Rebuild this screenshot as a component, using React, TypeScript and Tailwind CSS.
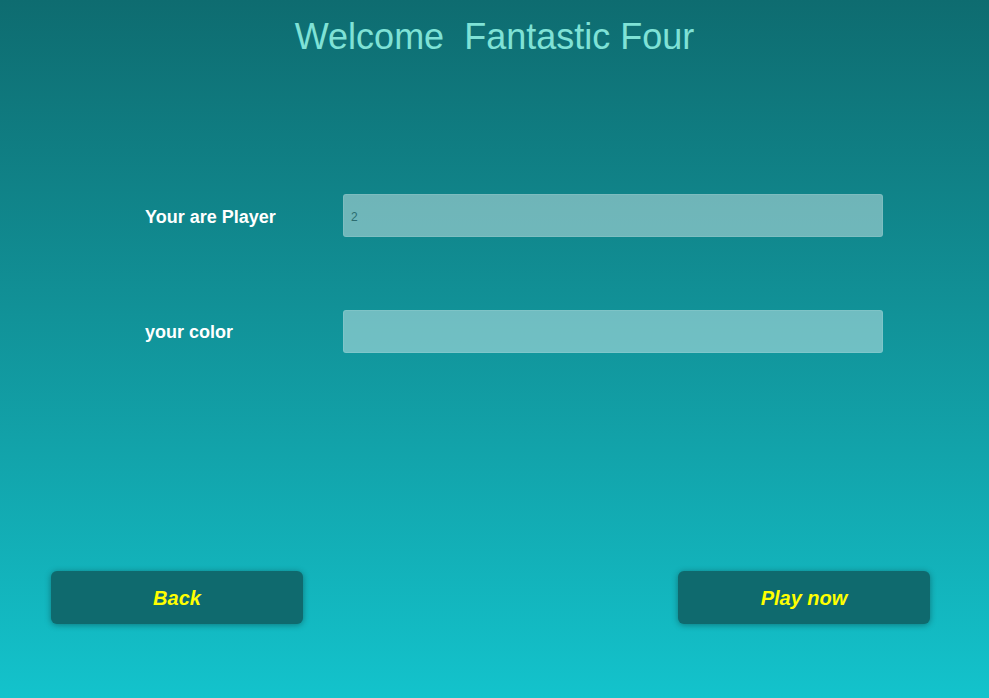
export default function App() {
  return (
    <div
      className="h-[698px] w-[989px] bg-gradient-to-b from-[#0e6c70] to-[#13c3cc] font-['Liberation_Sans',Arial,sans-serif] flex flex-col"
    >
      {/* Заголовок */}
      <h1 className="pt-[15px] text-center text-[36px] leading-[44px] text-[#7fe2d6] whitespace-pre">
        Welcome  Fantastic Four
      </h1>

      {/* Поля */}
      <div className="mt-[135px] flex flex-col gap-[73px] pl-[145px]">
        <div className="flex items-center">
          <label className="w-[198px] pt-[3px] text-[18px] font-bold text-white">Your are Player</label>
          <input
            readOnly
            value="2"
            className="h-[43px] w-[540px] rounded-[3px] border border-white/10 bg-white/40 px-[7px] pt-[2px] text-[12px] text-[#2c6d70] outline-none"
          />
        </div>
        <div className="flex items-center">
          <label className="w-[198px] pt-[1px] text-[18px] font-bold text-white">your color</label>
          <input
            readOnly
            className="h-[43px] w-[540px] rounded-[3px] border border-white/10 bg-white/40 px-[7px] text-[12px] text-[#2c6d70] outline-none"
          />
        </div>
      </div>

      {/* Кнопки */}
      <div className="mt-[218px] flex justify-between pl-[51px] pr-[59px]">
        <button className="h-[53px] w-[252px] rounded-[6px] bg-[#0f6a6e] text-[20px] font-bold italic text-[#ffff00] shadow-[0_1px_6px_rgba(0,0,0,0.35)]">
          Back
        </button>
        <button className="h-[53px] w-[252px] rounded-[6px] bg-[#0f6a6e] text-[20px] font-bold italic text-[#ffff00] shadow-[0_1px_6px_rgba(0,0,0,0.35)]">
          Play now
        </button>
      </div>
    </div>
  )
}
